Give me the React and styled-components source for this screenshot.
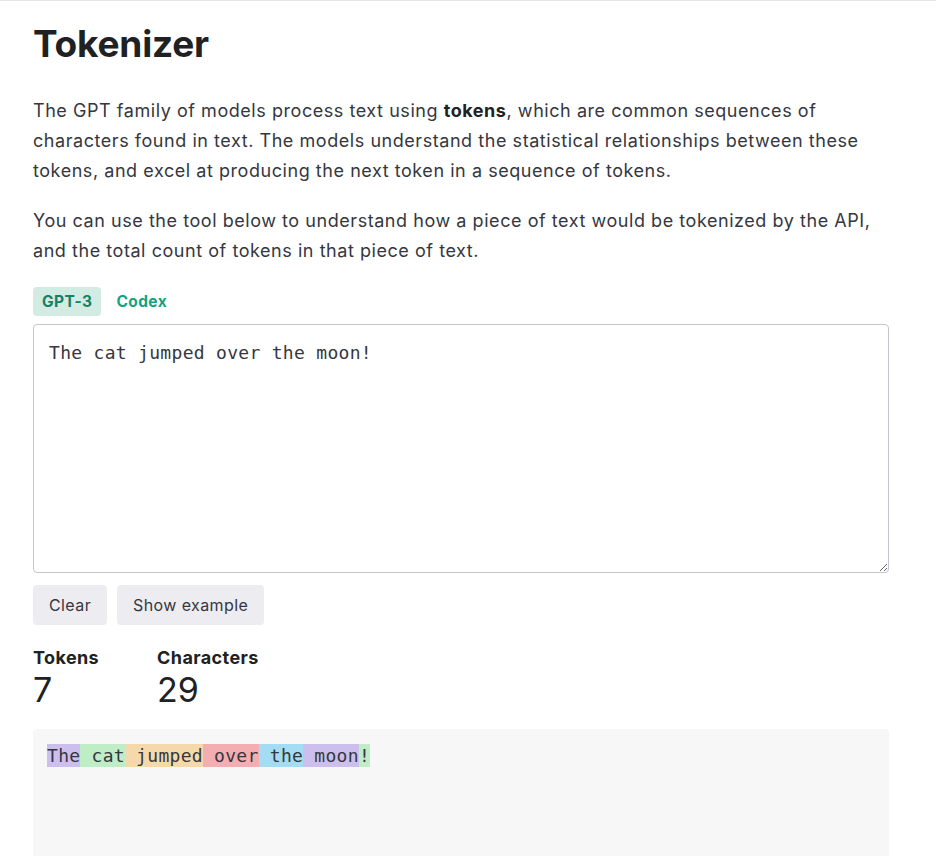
import styled, { createGlobalStyle } from "styled-components";

const GlobalStyle = createGlobalStyle`
  body {
    margin: 0;
    background: #fff;
    font-family: Inter, "Noto Sans", sans-serif;
    color: #353740;
  }
`;

const Page = styled.div`
  border-top: 1px solid #e5e5ea;
  padding: 0 47px 0 33px;
  width: 856px;
`;

const Title = styled.h1`
  margin: 19px 0 0;
  font-size: 37px;
  line-height: 48px;
  font-weight: 700;
  color: #202123;
  letter-spacing: -0.2px;
`;

const Paragraph = styled.p`
  margin: ${(p) => p.$top}px 0 0;
  font-size: 18px;
  line-height: 30px;
  color: #353740;
  letter-spacing: 0.55px;
  b {
    font-weight: 700;
    color: #202123;
  }
`;

const Tabs = styled.div`
  display: flex;
  gap: 6px;
  margin-top: 21px;
`;

const Tab = styled.button`
  border: none;
  border-radius: 4px;
  height: 29px;
  padding: 0 9px;
  font-family: inherit;
  font-size: 15.5px;
  font-weight: 700;
  letter-spacing: 0.4px;
  background: ${(p) => (p.$active ? "#d2ebe3" : "transparent")};
  color: ${(p) => (p.$active ? "#1a7f64" : "#10a37f")};
  cursor: pointer;
`;

const mono = `
  font-family: "DejaVu Sans Mono", "Liberation Mono", monospace;
  font-size: 18px;
  letter-spacing: 0.3px;
  line-height: 24px;
  color: #353740;
`;

const Input = styled.textarea`
  display: block;
  box-sizing: border-box;
  width: 856px;
  height: 249px;
  margin-top: 8px;
  padding: 16px 15px;
  border: 1px solid #c5c5d2;
  border-radius: 4px;
  ${mono}
  resize: vertical;
  outline: none;
`;

const Actions = styled.div`
  display: flex;
  gap: 10px;
  margin-top: 12px;
`;

const Button = styled.button`
  height: 40px;
  padding: 0 16px;
  border: none;
  border-radius: 4px;
  background: #ececf1;
  font-family: inherit;
  font-size: 16px;
  letter-spacing: 0.4px;
  color: #353740;
  cursor: pointer;
`;

const Stats = styled.div`
  display: flex;
  gap: 58px;
  margin-top: 22px;
`;

const Stat = styled.div`
  display: flex;
  flex-direction: column;
`;

const StatLabel = styled.div`
  font-size: 18px;
  font-weight: 700;
  line-height: 22px;
  letter-spacing: 0.4px;
  color: #202123;
`;

const StatValue = styled.div`
  font-size: 34px;
  font-weight: 400;
  line-height: 42px;
  color: #202123;
`;

const Output = styled.div`
  margin-top: 18px;
  height: 200px;
  padding: 15px 14px;
  box-sizing: border-box;
  background: #f7f7f8;
  border-radius: 4px;
  ${mono}
  white-space: pre-wrap;
`;

const Token = styled.span`
  background: ${(p) => p.$color};
  padding: 1px 0;
`;

const colors = [
  "rgba(107,64,216,0.3)",
  "rgba(104,222,122,0.4)",
  "rgba(244,172,54,0.4)",
  "rgba(239,65,70,0.4)",
  "rgba(39,181,234,0.4)",
];

const tokens = ["The", " cat", " jumped", " over", " the", " moon", "!"];

export default function App() {
  const text = "The cat jumped over the moon!";
  return (
    <>
      <GlobalStyle />
      <Page>
        <Title>Tokenizer</Title>
        <Paragraph $top={28}>
          The GPT family of models process text using <b>tokens</b>, which are
          common sequences of characters found in text. The models understand
          the statistical relationships between these tokens, and excel at
          producing the next token in a sequence of tokens.
        </Paragraph>
        <Paragraph $top={20}>
          You can use the tool below to understand how a piece of text would be
          tokenized by the API, and the total count of tokens in that piece of
          text.
        </Paragraph>
        <Tabs>
          <Tab $active>GPT-3</Tab>
          <Tab>Codex</Tab>
        </Tabs>
        <Input defaultValue={text} />
        <Actions>
          <Button>Clear</Button>
          <Button>Show example</Button>
        </Actions>
        <Stats>
          <Stat>
            <StatLabel>Tokens</StatLabel>
            <StatValue>{tokens.length}</StatValue>
          </Stat>
          <Stat>
            <StatLabel>Characters</StatLabel>
            <StatValue>{text.length}</StatValue>
          </Stat>
        </Stats>
        <Output>
          {tokens.map((t, i) => (
            <Token key={i} $color={colors[i % colors.length]}>
              {t}
            </Token>
          ))}
        </Output>
      </Page>
    </>
  );
}
